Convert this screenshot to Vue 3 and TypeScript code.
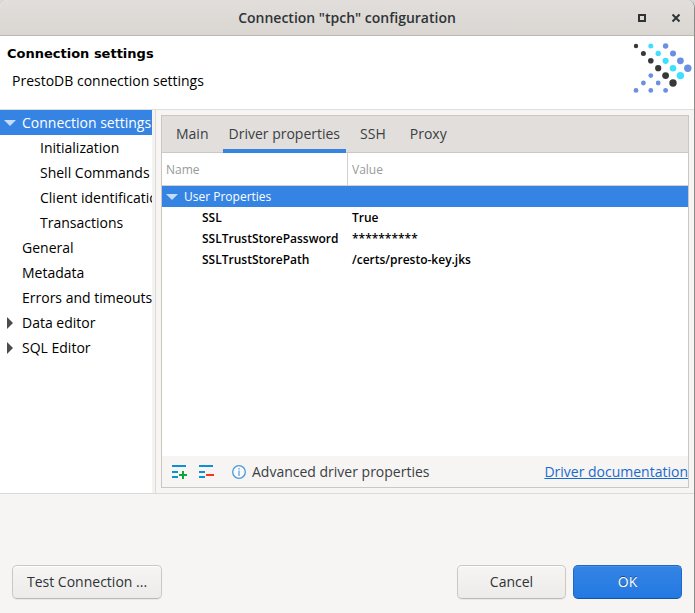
<script setup lang="ts">
import { ref } from 'vue'

interface TreeNode {
  label: string
  level: number
  state?: 'open' | 'closed'
}

interface Property {
  name: string
  value: string
}

interface Dot {
  x: number
  y: number
  r: number
  tone: 'dark' | 'cyan' | 'blue'
}

const nodes: TreeNode[] = [
  { label: 'Connection settings', level: 0, state: 'open' },
  { label: 'Initialization', level: 1 },
  { label: 'Shell Commands', level: 1 },
  { label: 'Client identification', level: 1 },
  { label: 'Transactions', level: 1 },
  { label: 'General', level: 0 },
  { label: 'Metadata', level: 0 },
  { label: 'Errors and timeouts', level: 0 },
  { label: 'Data editor', level: 0, state: 'closed' },
  { label: 'SQL Editor', level: 0, state: 'closed' },
]

const tabs: string[] = ['Main', 'Driver properties', 'SSH', 'Proxy']

const properties: Property[] = [
  { name: 'SSL', value: 'True' },
  { name: 'SSLTrustStorePassword', value: '**********' },
  { name: 'SSLTrustStorePath', value: '/certs/presto-key.jks' },
]

const dots: Dot[] = [
  { x: 3, y: 3, r: 2.2, tone: 'dark' },
  { x: 10.4, y: 10.4, r: 2.5, tone: 'dark' },
  { x: 17.8, y: 17.8, r: 2.8, tone: 'dark' },
  { x: 25.2, y: 25.2, r: 3.1, tone: 'dark' },
  { x: 32.6, y: 32.6, r: 3.4, tone: 'dark' },
  { x: 40, y: 40, r: 3.7, tone: 'dark' },
  { x: 17.8, y: 3, r: 2.5, tone: 'cyan' },
  { x: 25.2, y: 10.4, r: 2.7, tone: 'cyan' },
  { x: 32.6, y: 17.8, r: 3.1, tone: 'cyan' },
  { x: 40, y: 25.2, r: 3.3, tone: 'cyan' },
  { x: 47.4, y: 32.6, r: 3.7, tone: 'cyan' },
  { x: 32.6, y: 3, r: 2.7, tone: 'blue' },
  { x: 40, y: 10.4, r: 3, tone: 'blue' },
  { x: 47.4, y: 17.8, r: 3.4, tone: 'blue' },
  { x: 54.8, y: 25.2, r: 3.7, tone: 'blue' },
  { x: 17.8, y: 32.6, r: 2.4, tone: 'blue' },
  { x: 10.4, y: 40, r: 2.4, tone: 'blue' },
  { x: 25.2, y: 40, r: 2.4, tone: 'blue' },
  { x: 3, y: 47.4, r: 2.4, tone: 'blue' },
  { x: 17.8, y: 47.4, r: 2.4, tone: 'blue' },
  { x: 32.6, y: 47.4, r: 2.4, tone: 'blue' },
]

const selectedNode = ref<string>('Connection settings')
const activeTab = ref<string>('Driver properties')
</script>

<template>
  <div class="dialog">
    <header class="titlebar">
      <h1 class="title">Connection "tpch" configuration</h1>
      <div class="window-controls">
        <button type="button" class="window-button" aria-label="Maximize">
          <svg width="10" height="10" viewBox="0 0 10 10"><rect x="2" y="2" width="6" height="6" fill="none" stroke="#2e3436" stroke-width="2" /></svg>
        </button>
        <button type="button" class="window-button" aria-label="Close">
          <svg width="10" height="10" viewBox="0 0 10 10"><path d="M1.5 1.5 8.5 8.5M8.5 1.5 1.5 8.5" fill="none" stroke="#2e3436" stroke-width="2" /></svg>
        </button>
      </div>
    </header>

    <section class="banner">
      <div>
        <h2 class="banner-title">Connection settings</h2>
        <p class="banner-text">PrestoDB connection settings</p>
      </div>
      <svg class="logo" width="59" height="51" viewBox="0 0 59 51" aria-hidden="true">
        <circle v-for="(dot, index) in dots" :key="index" :cx="dot.x" :cy="dot.y" :r="dot.r" :class="dot.tone" />
      </svg>
    </section>

    <main class="body">
      <nav class="sidebar" aria-label="Settings pages">
        <ul class="tree">
          <li v-for="node in nodes" :key="node.label">
            <button
              type="button"
              class="node"
              :class="{ child: node.level === 1, selected: node.label === selectedNode }"
              @click="selectedNode = node.label"
            >
              <span v-if="node.level === 0" class="expander">
                <svg v-if="node.state === 'open'" width="12" height="6" viewBox="0 0 12 6"><path d="M0 0H12L6 6Z" fill="currentColor" /></svg>
                <svg v-else-if="node.state === 'closed'" width="6" height="12" viewBox="0 0 6 12"><path d="M0 0V12L6 6Z" fill="currentColor" /></svg>
              </span>
              <span class="node-label">{{ node.label }}</span>
            </button>
          </li>
        </ul>
      </nav>

      <div class="content">
        <section class="panel">
          <div class="tabs" role="tablist">
            <button
              v-for="tab in tabs"
              :key="tab"
              type="button"
              role="tab"
              class="tab"
              :class="{ active: tab === activeTab }"
              :aria-selected="tab === activeTab"
              @click="activeTab = tab"
            >
              {{ tab }}
            </button>
          </div>

          <div class="properties">
            <table class="grid">
              <colgroup>
                <col class="name-column" />
                <col />
              </colgroup>
              <thead>
                <tr>
                  <th scope="col">Name</th>
                  <th scope="col">Value</th>
                </tr>
              </thead>
              <tbody>
                <tr class="group">
                  <td colspan="2">
                    <span class="group-label">
                      <svg width="12" height="6" viewBox="0 0 12 6"><path d="M0 0H12L6 6Z" fill="currentColor" /></svg>
                      User Properties
                    </span>
                  </td>
                </tr>
                <tr v-for="property in properties" :key="property.name" class="property">
                  <td>{{ property.name }}</td>
                  <td>{{ property.value }}</td>
                </tr>
              </tbody>
            </table>
          </div>

          <footer class="toolbar">
            <button type="button" class="tool" aria-label="Add property">
              <svg width="16" height="14" viewBox="0 0 16 14">
                <path d="M0 1H14M0 7H6M0 12H6" stroke="#0f90d2" stroke-width="2" />
                <path d="M7 10H15M11 6V14" stroke="#0aa83c" stroke-width="2" />
              </svg>
            </button>
            <button type="button" class="tool" aria-label="Remove property">
              <svg width="16" height="14" viewBox="0 0 16 14">
                <path d="M0 1H14M0 7H6M0 12H6" stroke="#0f90d2" stroke-width="2" />
                <path d="M7 10H15" stroke="#fb341e" stroke-width="2" />
              </svg>
            </button>
            <span class="hint">
              <svg width="14" height="14" viewBox="0 0 14 14">
                <circle cx="7" cy="7" r="6.3" fill="#f8fbfd" stroke="#4a98d3" stroke-width="1.3" />
                <path d="M7 3V4.5M7 5.5V11" stroke="#7fb2dc" stroke-width="1.6" />
              </svg>
              Advanced driver properties
            </span>
            <a class="doc-link" href="#documentation">Driver documentation</a>
          </footer>
        </section>
      </div>
    </main>

    <footer class="actions">
      <button type="button" class="action">Test Connection ...</button>
      <div class="confirm">
        <button type="button" class="action">Cancel</button>
        <button type="button" class="action primary">OK</button>
      </div>
    </footer>
  </div>
</template>

<style>
html,
body {
  margin: 0;
  background: #d8d8d8;
}
</style>

<style scoped>
.dialog {
  box-sizing: border-box;
  display: flex;
  flex-direction: column;
  min-height: 100vh;
  border-right: 1px solid #8c8b8a;
  border-radius: 8px 8px 0 0;
  overflow: hidden;
  background: #f6f5f4;
  color: #000;
  font-family: "Open Sans", "Noto Sans", sans-serif;
  font-size: 14px;
  line-height: 20px;
}

button {
  margin: 0;
  padding: 0;
  border: 0;
  background: none;
  color: inherit;
  font: inherit;
}

svg {
  display: block;
  flex: none;
}

.titlebar {
  display: grid;
  grid-template-columns: 1fr auto 1fr;
  align-items: center;
  height: 35px;
  border-bottom: 1px solid #bfb8b1;
  background: linear-gradient(#e1dedb, #dad6d2);
  color: #2e3436;
}

.title {
  grid-column: 2;
  margin: 0;
  font-size: 14px;
  font-weight: 600;
}

.window-controls {
  display: flex;
  justify-content: flex-end;
  gap: 24px;
  padding-right: 13px;
}

.banner {
  display: flex;
  justify-content: space-between;
  box-sizing: border-box;
  min-height: 74px;
  padding: 7px 2px 0 7px;
  border-bottom: 1px solid #dededd;
  background: #fff;
}

.banner-title {
  margin: 0;
  font-family: "DejaVu Sans", sans-serif;
  font-size: 13px;
  font-weight: 700;
  line-height: 22px;
}

.banner-text {
  margin: 6px 0 0 5px;
}

.dark {
  fill: #383838;
}

.cyan {
  fill: #3fe0ff;
}

.blue {
  fill: #6b8fe3;
}

.body {
  display: flex;
  flex: 1;
  border-bottom: 1px solid #dcdad7;
}

.sidebar {
  width: 152px;
  flex: none;
  border-right: 3px solid #f3f3f2;
  background: #fff;
}

.tree {
  margin: 0;
  padding: 0;
  list-style: none;
}

.node {
  display: flex;
  align-items: center;
  width: 100%;
  height: 25px;
  overflow: hidden;
  color: #000;
  text-align: left;
  white-space: nowrap;
}

.node.child {
  padding-left: 40px;
}

.node.selected {
  background: #3584e4;
  color: #fff;
}

.expander {
  display: flex;
  flex: none;
  justify-content: center;
  width: 22px;
  box-sizing: border-box;
  padding-right: 2px;
  color: #4c4c4c;
}

.selected .expander {
  color: #c5dbf7;
}

.content {
  display: flex;
  flex: 1;
  min-width: 0;
  padding: 5px;
  border-left: 1px solid #dcdad7;
}

.panel {
  display: flex;
  flex: 1;
  flex-direction: column;
  min-width: 0;
  border: 1px solid #cdc7c2;
}

.tabs {
  display: flex;
  height: 36px;
  border-bottom: 1px solid #cdc7c2;
  background: #e1dedb;
  color: #3a4043;
}

.tab {
  box-sizing: border-box;
  height: 37px;
  padding: 2px 10px 0 14px;
  border-bottom: 4px solid transparent;
}

.tab.active {
  margin-left: 4px;
  padding: 2px 6px 0;
  border-bottom-color: #3584e4;
}

.properties {
  flex: 1;
  background: #fff;
}

.grid {
  width: 100%;
  border-collapse: separate;
  border-spacing: 0;
  table-layout: fixed;
  font-size: 12px;
  line-height: 21px;
}

.name-column {
  width: 186px;
}

.grid th {
  height: 32px;
  padding: 0 4px;
  border-bottom: 1px solid #d5d0cc;
  color: #979a9b;
  font-weight: 400;
  text-align: left;
}

.grid th:first-child {
  border-right: 1px solid #d5d0cc;
}

.grid td {
  height: 21px;
  padding: 0 4px;
}

.group {
  background: #3584e4;
  color: #fff;
}

.group-label {
  display: flex;
  align-items: center;
  gap: 6px;
}

.group-label svg {
  color: #c5dbf7;
}

.property {
  font-weight: 600;
}

.property td:first-child {
  padding-left: 40px;
}

.toolbar {
  display: flex;
  align-items: center;
  height: 31px;
  padding-left: 10px;
  color: #3a4043;
}

.tool {
  margin-right: 11px;
}

.hint {
  display: flex;
  align-items: center;
  gap: 6px;
  margin-left: 6px;
}

.doc-link {
  margin-left: auto;
  color: #1b6acb;
  text-decoration: underline;
}

.actions {
  display: flex;
  align-items: flex-end;
  justify-content: space-between;
  box-sizing: border-box;
  min-height: 119px;
  padding: 0 12px 14px;
}

.confirm {
  display: flex;
  gap: 7px;
}

.action {
  box-sizing: border-box;
  min-width: 109px;
  height: 34px;
  padding: 0 14px;
  border: 1px solid #cdc7c2;
  border-bottom-color: #bfb8b1;
  border-radius: 5px;
  background: linear-gradient(#f6f5f4, #edebe9);
  box-shadow: inset 0 1px #fff, 0 1px 1px rgb(0 0 0 / 6%);
  color: #2e3436;
}

.action.primary {
  border-color: #1b6acb;
  border-bottom-color: #15539e;
  background: linear-gradient(#3584e4, #2379e2);
  box-shadow: inset 0 1px #4a90e6;
  color: #fff;
  text-shadow: 0 -1px rgb(0 0 0 / 45%);
}
</style>
